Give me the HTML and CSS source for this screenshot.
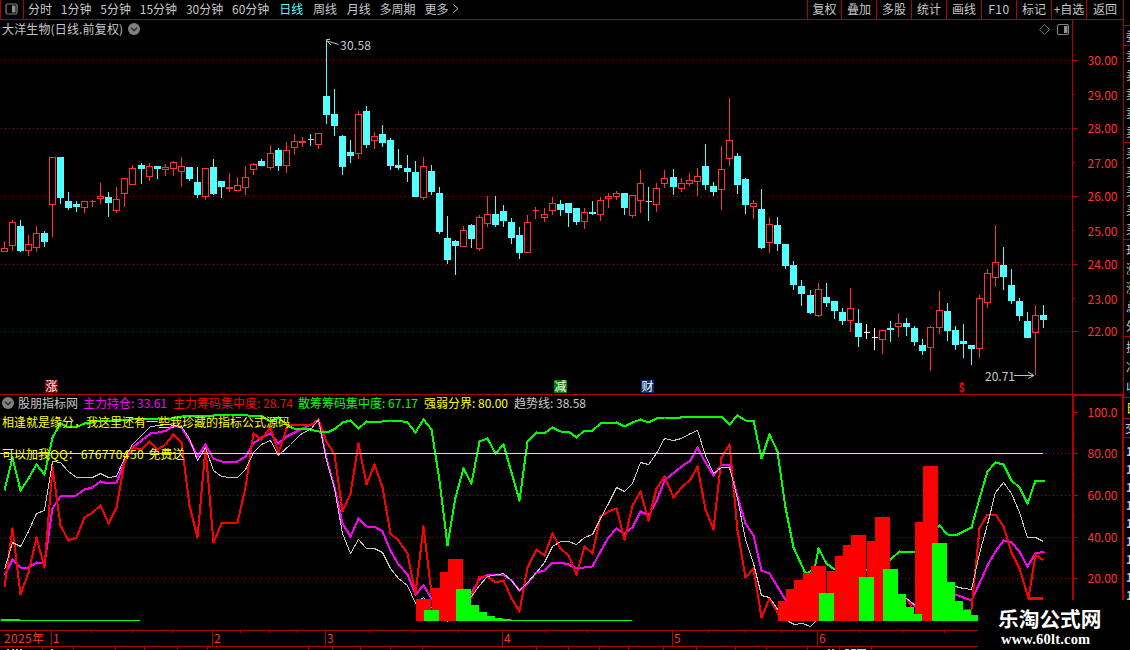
FILE: index.html
```html
<!DOCTYPE html>
<html lang="zh-CN">
<head>
<meta charset="utf-8">
<title>大洋生物 日线</title>
<link rel="stylesheet" href="styles.css">
</head>
<body>
<div class="app">
  <div class="main">
    <header class="toolbar">
      <div class="panel-toggle">
        <svg width="13" height="12" viewBox="0 0 13 12"><rect x="1" y="1" width="11" height="10" rx="1.5" fill="none" stroke="#808080" stroke-width="1.2"/><rect x="7" y="2.5" width="3.5" height="7" fill="#909090"/></svg>
      </div>
      <nav class="periods">
        <span>分时</span><span>1分钟</span><span>5分钟</span><span>15分钟</span><span>30分钟</span><span>60分钟</span><span class="active">日线</span><span class="week">周线</span><span class="month">月线</span><span>多周期</span><span>更多</span>
        <svg class="chev" width="6" height="9" viewBox="0 0 6 9"><path d="M.5.5 5 4.5.5 8.5" fill="none" stroke="#c0c0c0"/></svg>
      </nav>
      <nav class="tools">
        <span class="first">复权</span><span>叠加</span><span>多股</span><span>统计</span><span>画线</span><span class="latin">F10</span><span>标记</span><span class="add">+自选</span><span class="last">返回</span>
      </nav>
    </header>
    <section class="pane price">
      <svg id="price" width="1124" height="374" viewBox="0 20 1124 374"></svg>
      <div class="title"><span>大洋生物(日线.前复权)</span>
        <svg width="12" height="12" viewBox="0 0 12 12"><circle cx="6" cy="6" r="6" fill="#808080"/><path d="M3 4.8 6 7.6 9 4.8" fill="none" stroke="#202020" stroke-width="1.2"/></svg>
      </div>
    </section>
    <section class="pane indicator">
      <svg id="indicator" width="1124" height="236" viewBox="0 394 1124 236"></svg>
      <div class="legend">
        <svg width="12" height="12" viewBox="0 0 12 12"><circle cx="6" cy="6" r="6" fill="#808080"/><path d="M3 4.8 6 7.6 9 4.8" fill="none" stroke="#202020" stroke-width="1.2"/></svg>
        <span>股朋指标网</span><span class="magenta">主力持仓: 33.61</span><span class="red">主力筹码集中度: 28.74</span><span class="green">散筹筹码集中度: 67.17</span><span class="yellow">强弱分界: 80.00</span><span>趋势线: 38.58</span>
      </div>
      <p class="note note-top">相逢就是缘分，我这里还有一些我珍藏的指标公式源码</p>
      <p class="note note-bottom">可以加我QQ：<span class="qq">676770450</span> 免费送</p>
    </section>
    <footer><svg id="dates" width="1124" height="20" viewBox="0 630 1124 20"></svg></footer>
  </div>
  <aside class="quotes">
    <div class="q head"></div>
    <div class="q q1"><span>委</span></div>
    <div class="q q5"><span>卖</span><span>卖</span><span>卖</span><span>卖</span><span>卖</span></div>
    <div class="q q5"><span>买</span><span>买</span><span>买</span><span>买</span><span>买</span></div>
    <div class="q q5"><span>现</span><span>涨</span><span>涨</span><span>总</span><span>外</span></div>
    <div class="q q3"><span>换</span><span>净</span><span>收</span></div>
    <div class="q tab"><span>日</span></div>
    <div class="q sub"><span>交</span></div>
    <div class="q ticks"><span>1</span><span>1</span><span>1</span><span>1</span><span>1</span><span>1</span><span>1</span><span>1</span><span>1</span></div>
  </aside>
  <div class="brand"><strong>乐淘公式网</strong><em>www.60lt.com</em></div>
</div>
<script src="chart.js"></script>
</body>
</html>
```
FILE: styles.css
```css
* { box-sizing: border-box; }
body { margin: 0; background: #000; color: #c8c8c8; font: 12px/14px "Noto Sans CJK SC", sans-serif; overflow: hidden; }
svg { display: block; }
svg text { font-family: "Noto Sans CJK SC", sans-serif; font-size: 12px; }
.app { position: relative; width: 1130px; height: 650px; display: grid; grid-template-columns: 1124px 6px; overflow: hidden; font-weight: 400; }
.main { display: grid; grid-template-rows: 20px 374px 236px 20px; }
.toolbar { display: flex; height: 20px; border-bottom: 1px solid #b00000; white-space: nowrap; }
.panel-toggle { width: 24px; border: solid #b00000; border-width: 0 1px; padding: 3px 0 0 4px; }
.periods { display: flex; flex: 1; gap: 8.8px; padding: 2px 0 0 4px; }
.periods .active { color: #54ffff; margin-left: 1px; }
.periods .week, .periods .month { margin-left: 1px; }
.chev { margin: 2px 0 0 -4px; }
.tools { display: flex; }
.tools span { width: 35px; border-left: 1px solid #b00000; text-align: center; padding-top: 2px; }
.tools .first { width: 34px; }
.tools .latin { letter-spacing: .6px; }
.tools .last { width: 38px; border-right: 1px solid #b00000; }
.pane { position: relative; }
.title { position: absolute; left: 2px; top: 2px; display: flex; gap: 5px; align-items: center; white-space: nowrap; letter-spacing: .15px; }
.legend { position: absolute; left: 2px; top: 2px; display: grid; grid-template-columns: 16px 65px 90px 125px 126px 90px 80px; align-items: center; white-space: nowrap; }
.magenta { color: #f0f; }
.red { color: #f00; }
.green { color: #0f0; }
.yellow, .note { color: #ff0; }
.note { position: absolute; left: 2px; margin: 0; white-space: nowrap; }
.note-top { top: 21px; }
.note-bottom { top: 53px; }
.qq { letter-spacing: .35px; margin-left: 1px; margin-right: 2px; }
.quotes { display: grid; grid-template-rows: 26px 20px 97px 97px 97px 61px 21px 19px 1fr; height: 650px; overflow: hidden; }
.q { border-bottom: 1px solid #b00000; padding-left: 2px; display: flex; flex-direction: column; justify-content: space-around; overflow: hidden; }
.q span { height: 14px; width: 12px; }
.q.tab { color: #ff0; }
.q.sub { padding-left: 1px; }
.q.ticks { justify-content: flex-start; gap: 4px; padding-top: 6px; border: 0; font-weight: 700; }
.brand { position: absolute; left: 978px; top: 600px; width: 152px; height: 50px; background: #000; color: #fff; display: flex; flex-direction: column; padding: 6px 0 0 20px; }
.brand strong { font: 700 20.7px/24px "Noto Sans CJK SC", sans-serif; }
.brand em { font: normal 700 14.5px/18px "Liberation Serif", serif; padding-left: 3px; letter-spacing: .2px; }
```
FILE: chart.js
```js
const AXIS = '#b00000', LABEL = '#ff3232', UP = '#ff3232', DOWN = '#54ffff';
const rect = (x, y, w, h, c) => `<rect x="${x}" y="${y}" width="${w}" height="${h}" fill="${c}"/>`;
const text = (x, y, w, s, c) => `<text x="${x}" y="${y}" textLength="${w}" fill="${c}">${s}</text>`;
const dots = y => `<path d="M1 ${y + .5}H1072" stroke="${AXIS}" stroke-dasharray="1 3" shape-rendering="crispEdges"/>`;

// type, centre x, high, body top, body bottom, low
const candles = `R4 241 248 252 252|R12 220 222 246 251|C20 220 226 251 252|R28 235 244 251 256|R36 226 233 248 252|C44 231 233 242 247|R52 157 157 205 237|C60 157 157 198 204|C68 192 201 208 210|C76 201 204 207 212|R84 201 201 208 213|R92 200 201 202 207|R100 183 196 199 204|C108 192 197 203 217|R116 187 199 211 213|R124 178 178 194 207|R132 165 168 185 185|C141 163 165 169 184|R149 163 166 177 181|C157 166 166 169 179|R165 164 167 170 176|R173 161 162 169 176|R181 157 166 172 187|C189 167 167 179 181|C197 167 182 195 198|R205 168 168 197 200|C213 159 167 194 195|C221 181 181 187 198|R229 173 187 189 192|R237 177 185 191 191|R245 166 177 188 195|R253 163 164 170 175|C261 159 161 166 166|R270 145 153 168 170|C278 148 150 166 171|R286 142 150 166 173|R294 134 141 148 155|R302 137 141 143 147|C310 134 139 140 146|R318 133 133 145 149|C326 43 96 115 124|C334 89 114 126 136|C342 135 136 167 175|C350 140 152 156 163|R358 111 114 154 159|C366 106 111 145 148|R374 132 136 141 149|C382 125 134 143 147|C390 138 140 166 170|C398 149 165 168 170|C407 155 168 172 182|C415 161 172 197 197|R423 157 166 198 200|C431 165 171 192 195|C439 187 193 232 234|C447 216 238 260 264|C455 240 241 246 275|R463 226 230 247 247|C471 224 225 239 248|R479 215 217 249 251|R487 196 214 224 227|C495 196 214 225 227|C503 205 211 221 227|C511 218 222 238 244|C519 227 235 253 259|R527 215 222 253 253|R535 207 210 211 219|R544 208 214 218 222|R552 197 203 211 215|C560 200 204 210 216|C568 203 203 213 227|C576 208 208 222 225|R584 208 212 222 229|C592 201 212 214 215|R600 197 200 215 221|R608 193 196 199 208|R616 191 193 197 200|C624 193 193 208 215|R632 195 195 216 218|R640 170 183 201 213|C648 187 201 202 221|R656 183 188 205 212|R664 170 178 184 188|C673 169 177 187 195|R681 178 183 189 192|R689 173 180 184 186|R697 168 176 182 196|C705 144 166 185 190|C713 182 186 192 196|R721 146 169 190 210|R729 98 140 159 166|C737 153 156 185 194|C745 178 179 205 214|R753 200 203 207 219|C761 189 209 248 249|R769 217 224 243 253|C777 217 225 244 251|C785 244 244 266 269|C793 261 265 285 290|C801 280 286 294 306|C810 290 295 313 314|R818 283 289 316 317|C826 283 297 303 307|C834 301 301 311 319|C842 308 312 321 325|R850 288 308 321 332|C858 309 323 337 347|W866 324 332 333 339|W874 328 337 338 350|R882 330 330 340 354|C890 321 328 330 342|R898 313 323 327 337|C906 318 323 327 336|C914 326 328 342 346|C922 339 345 351 355|R930 326 327 348 371|R939 291 310 328 334|C947 303 311 331 341|C955 326 330 345 350|C963 324 341 344 358|C971 345 345 349 365|R979 295 298 349 358|R987 269 273 303 308|R995 225 262 278 287|C1003 247 265 277 290|C1011 269 285 301 304|C1019 298 301 316 321|C1027 312 321 338 338|R1035 305 315 333 375|C1043 305 315 320 328`;

let p = [60, 128, 196, 264, 331].map(dots).join('');
p += rect(1072, 20, 1, 374, AXIS) + rect(1123, 20, 1, 374, AXIS);
[60, 128, 196, 264, 331].forEach(y => p += rect(1073, y, 5, 1, AXIS));
[94, 162, 230, 298].forEach(y => p += rect(1073, y, 2, 1, AXIS));
[61, 96, 129, 164, 197, 232, 265, 300, 332].forEach((y, i) => p += text(1087.5, y + 4, 30, (30 - i) + '.00', LABEL));
for (const item of candles.split('|')) {
  const type = item[0], [x, hi, top, bot, lo] = item.slice(1).split(' ').map(Number);
  const c = { R: UP, C: DOWN, W: '#fff' }[type];
  if (hi < top) p += rect(x, hi, 1, top - hi, c);
  if (lo > bot) p += rect(x, bot, 1, lo - bot, c);
  if (type === 'R' && bot - top > 2)
    p += `<rect x="${x - 2.5}" y="${top + .5}" width="6" height="${bot - top - 1}" fill="none" stroke="${c}"/>`;
  else
    p += rect(bot - top === 1 ? x - 2 : x - 3, top, bot - top === 1 ? 6 : 7, bot - top, c);
}
p += '<path d="M338.5 44.5 334 43 327 41M330 39.500H326.500V43M327 41l4 4M1014 375.500h20M1028 372l6 3.500-6 3" fill="none" stroke="#c0c0c0"/>';
p += text(340, 50, 31, '30.58', '#c8c8c8') + text(985, 381, 30, '20.71', '#c8c8c8');
[[45, '#800000', '涨'], [554, '#008000', '减'], [641, '#003366', '财']].forEach(([x, c, s]) => {
  p += rect(x, 380, 13, 13, c) + `<text x="${x + .5}" y="391" fill="#fff">${s}</text>`;
});
p += '<text x="958.500" y="392" fill="#f00" style="font-weight:700;font-size:11px">$</text><path d="M959 384l3-2 3 2z" fill="#f00"/>';
p += '<path d="M1039.500 29.500l5-5 5 5-5 5z" fill="none" stroke="#707070"/><rect x="1057.500" y="24.500" width="11" height="10" rx="1.500" fill="none" stroke="#808080" stroke-width="1.200"/><rect x="1064" y="26" width="3.500" height="7" fill="#909090"/>';
document.getElementById('price').innerHTML = p;

const line = (pts, c, w) => `<polyline points="${pts}" fill="none" stroke="${c}" stroke-width="${w}" stroke-linejoin="round" shape-rendering="crispEdges" transform="translate(.5 .5)"/>`;
let q = [453, 495, 537, 578].map(dots).join('');
q += line('4,575 12,559 20,567 28,567 36,562 44,563 52,508 60,496 76,495 84,489 92,487 100,481 108,483 116,482 124,462 132,447 150,433 158,432 166,430 173,425 181,427 189,440 197,456 205,444 213,458 221,461 237,461 245,456 253,443 261,437 270,433 278,443 286,436 300,429 311,424 318,419 326,458 334,487 342,523 350,536 358,518 366,526 374,526 382,531 390,550 398,564 407,574 415,594 423,585 431,598 447,612 463,604 471,592 479,579 487,574 503,574 511,580 519,590 527,583 536,572 544,570 552,562 560,562 568,564 576,568 584,567 592,566 600,551 608,537 616,528 624,533 632,527 640,511 648,515 656,501 664,480 681,466 690,460 697,447 705,462 713,475 721,464 729,465 737,496 745,523 753,535 761,570 769,573 786,601', '#f0f', 2);
q += line('906,598 915,606', '#f0f', 2) + line('955,594 963,597 971,600 979,583 987,565 995,551 1003,540 1011,542 1019,551 1027,566 1035,553 1044,551', '#f0f', 2);
q += line('4,587 12,528 20,594 28,572 36,537 44,567 52,467 60,525 68,540 76,537 84,517 92,512 100,505 108,523 116,507 124,462 132,447 141,449 149,441 157,449 165,444 173,434 181,442 189,505 197,537 205,447 213,542 221,523 237,522 245,487 253,433 261,439 270,427 278,453 287,425 300,424 312,424 318,419 326,441 334,454 342,511 350,493 358,443 366,484 374,464 382,487 390,533 398,540 407,553 415,593 423,526 431,593 463,589 471,597 479,576 487,576 495,582 503,580 511,598 519,611 527,567 536,549 544,555 552,533 560,548 568,555 576,574 584,546 592,553 600,516 608,511 616,508 624,539 632,505 640,491 648,520 656,488 664,476 673,497 681,487 690,479 697,466 705,509 713,529 721,457 729,444 737,530 745,577 753,568 761,617 769,598 778,614', '#f00', 2);
q += line('906,598 912,608', '#f00', 2) + line('963,609 971,609 979,528 987,514 995,514 1003,526 1011,552 1019,568 1028,598 1035,554 1043,560', '#f00', 2);
q += line('4,490 12,457 20,490 28,478 36,464 44,474 52,437 60,423 68,427 77,426 84,423 100,420 108,421 142,418 150,419 158,418 166,419 187,415 213,415 230,414 247,415 262,416 270,421 278,417 287,425 293,428 305,428 318,431 327,432 335,428 342,422 350,420 358,428 366,421 374,422 390,420 398,420 407,422 415,432 423,419 431,429 439,480 447,545 455,497 463,468 471,483 479,441 487,438 495,453 503,444 511,472 519,500 527,441 536,432 544,433 552,427 560,431 568,431 576,437 584,430 592,430 600,423 616,422 624,426 632,422 640,419 648,422 656,418 664,417 680,417 682,416 721,416 729,424 737,415 745,420 753,420 761,458 769,434 777,451 785,507 793,547 805,573 814,569 818,548 826,563 834,569 866,570 890,559 899,551 915,552 939,525 947,534 957,534 971,527 979,498 987,471 995,462 1003,464 1011,480 1019,487 1027,503 1035,480 1044,480', '#0f0', 2);
q += line('4,569 12,542 20,546 28,531 36,513 44,510 52,461 60,462 68,471 76,477 92,477 100,473 108,477 116,476 124,458 132,444 150,426 167,424 181,426 189,438 197,460 205,447 213,470 221,476 229,477 237,477 245,469 253,452 261,444 270,440 278,455 290,444 300,434 311,428 318,419 326,460 334,488 342,533 350,553 358,539 366,548 374,548 382,552 390,568 398,578 407,585 415,603 423,597 431,607 447,621 471,596 479,585 487,576 503,573 511,580 519,590 527,582 536,572 544,562 552,546 560,541 568,541 576,544 584,537 592,534 600,518 608,503 616,487 624,491 632,483 640,462 648,464 656,453 664,438 673,440 681,438 690,433 697,430 705,455 713,473 721,467 729,467 737,498 745,539 753,563 761,595 769,597 778,610 788,621 794,624 802,623 810,626 815,621', '#c8c8c8', 1);
q += line('906,598 915,605', '#c8c8c8', 1) + line('955,586 963,588 971,589 979,553 987,524 995,492 1003,482 1011,493 1019,512 1027,537 1035,537 1043,541', '#c8c8c8', 1);
q += rect(0, 453, 1043, 1, '#ff0') + rect(1028, 597, 15, 3, '#f00');
const bars = (list, c) => list.forEach(([a, b, y]) => q += rect(a, y, b - a, 621 - y, c));
bars([[416, 431, 599], [432, 440, 588], [440, 448, 572], [448, 463, 559], [424, 448, 610], [778, 786, 601], [786, 794, 589], [794, 803, 580], [803, 811, 573], [811, 826, 566], [827, 835, 571], [835, 843, 556], [843, 851, 545], [851, 866, 535], [867, 875, 541], [875, 890, 517], [915, 923, 522], [923, 938, 466]], '#f00');
bars([[424, 439, 610], [456, 471, 589], [471, 479, 605], [479, 487, 612], [487, 495, 616], [495, 503, 618], [503, 511, 619], [511, 632, 620], [1, 20, 619], [20, 140, 620], [819, 834, 593], [859, 874, 577], [883, 898, 569], [898, 906, 594], [906, 914, 607], [914, 922, 614], [932, 947, 543], [947, 955, 582], [955, 963, 601], [963, 971, 610], [971, 978, 615]], '#0f0');
q += rect(0, 394, 1124, 1, AXIS) + rect(1072, 394, 52, 2, AXIS) + rect(1072, 394, 2, 236, AXIS) + rect(1122, 394, 2, 236, AXIS);
[412, 453, 495, 537, 578].forEach((y, i) => {
  q += rect(1074, y, 4, 1, AXIS) + text(1087.5, y + 5, 30, ['100.0', '80.00', '60.00', '40.00', '20.00'][i], LABEL);
});
[433, 474, 516, 558].forEach(y => q += rect(1074, y, 1, 1, AXIS));
document.getElementById('indicator').innerHTML = q;

let d = rect(0, 630, 978, 1, AXIS) + rect(0, 646, 978, 1, AXIS);
[91, 132, 172, 240, 269, 297, 369, 414, 458, 545, 587, 708, 745, 781, 859, 902, 944].forEach(x => d += rect(x, 631, 1, 2, AXIS));
[42, 73, 115, 144, 177, 207, 308, 332, 360, 390, 422, 536, 568, 599, 628, 663, 696, 735, 766, 807, 839, 871].forEach(x => d += rect(x, 647, 1, 3, AXIS));
[51, 212, 325, 502, 672, 817].forEach((x, i) => d += rect(x, 631, 1, 15, AXIS) + text(x + 2, 643, 6.5, i + 1, LABEL));
d += text(4, 643, 40, '2025年', LABEL);
[7, 12, 16, 20, 51, 828, 832].forEach(x => d += rect(x, 649, 2, 1, '#c0c0c0'));
[[845, 4], [851, 5], [857, 9]].forEach(([x, w]) => d += rect(x, 649, w, 1, DOWN));
document.getElementById('dates').innerHTML = d;
```
